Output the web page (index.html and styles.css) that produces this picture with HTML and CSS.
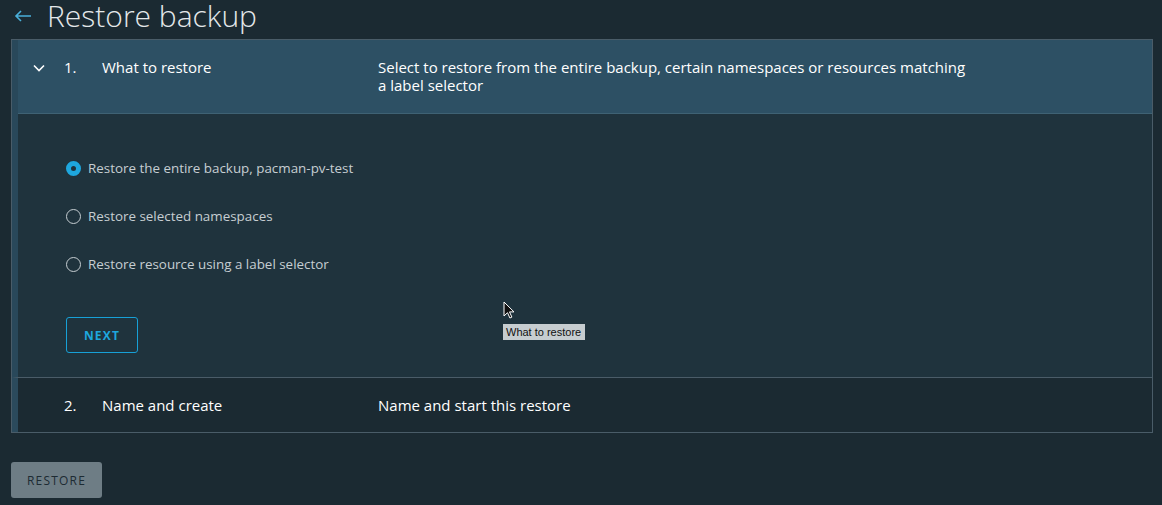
FILE: index.html
```html
<!DOCTYPE html>
<html lang="en">
<head>
    <meta charset="UTF-8">
    <title>Restore backup</title>
    <link rel="stylesheet" href="styles.css">
</head>
<body>
    <div class="page">
        <div class="title-bar">
            <svg class="back" width="20" height="14" viewBox="0 0 20 14">
                <path d="M18 7H3M8 2L3 7l5 5" fill="none" stroke="#49afd9" stroke-width="1.6"/>
            </svg>
            <h1>Restore backup</h1>
        </div>

        <div class="steps">
            <div class="step active">
                <div class="step-head">
                    <svg class="chevron" width="12" height="8" viewBox="0 0 12 8">
                        <path d="M1 1.5l5 5 5-5" fill="none" stroke="#fff" stroke-width="1.6"/>
                    </svg>
                    <span class="num">1.</span>
                    <span class="name">What to restore</span>
                    <span class="desc">Select to restore from the entire backup, certain namespaces or resources matching a label selector</span>
                </div>
                <div class="step-body">
                    <label class="radio"><span class="dot checked"></span>Restore the entire backup, pacman-pv-test</label>
                    <label class="radio"><span class="dot"></span>Restore selected namespaces</label>
                    <label class="radio"><span class="dot"></span>Restore resource using a label selector</label>
                    <button class="btn-outline">NEXT</button>

                    <div class="tip-wrap">
                        <svg class="cursor" width="12" height="18" viewBox="0 0 12 18">
                            <path d="M1 1v14l3.5-3.3 2.4 5.3 2-0.9-2.4-5.2H11z" fill="#111" stroke="#fff" stroke-width="1"/>
                        </svg>
                        <span class="tooltip">What to restore</span>
                    </div>
                </div>
            </div>
            <div class="step">
                <div class="step-head">
                    <span class="chevron-space"></span>
                    <span class="num">2.</span>
                    <span class="name">Name and create</span>
                    <span class="desc">Name and start this restore</span>
                </div>
            </div>
        </div>

        <button class="btn-disabled">RESTORE</button>
    </div>
</body>
</html>
```

FILE: styles.css
```css
body {
    margin: 0;
    background-color: #1b2a32;
    font-family: 'Open Sans', 'Lato', sans-serif;
    color: #e9ecef;
}

.page {
    padding: 0 9px 0 11px;
}

.title-bar {
    display: flex;
    align-items: center;
    height: 32px;
    padding-left: 2px;
}

.back {
    margin-right: 14px;
}

h1 {
    margin: 0;
    font-size: 30px;
    line-height: 32px;
    font-weight: 300;
    color: #e4e8ea;
}

.steps {
    margin-top: 7px;
    border: 1px solid #4a5c68;
}

.step {
    border-left: 6px solid #2b4a5c;
}

.step + .step {
    border-top: 1px solid #4a5c68;
}

.step.active {
    border-left-color: #29485a;
}

.step-head {
    display: flex;
    align-items: flex-start;
    padding: 18px 0 0 0;
    font-size: 15px;
    line-height: 18px;
    color: #fff;
    height: 36px;
}

.step.active .step-head {
    background-color: #2d5064;
    height: 55px;
    border-bottom: 1px solid #3f6274;
}

.chevron, .chevron-space {
    width: 12px;
    margin: 6px 0 0 15px;
    flex-shrink: 0;
}

.num {
    width: 38px;
    margin-left: 19px;
    flex-shrink: 0;
}

.name {
    width: 276px;
    flex-shrink: 0;
}

.desc {
    max-width: 596px;
}

.step-body {
    position: relative;
    background-color: #1f333d;
    padding: 38px 0 24px 48px;
}

.radio {
    display: flex;
    align-items: center;
    height: 48px;
    font-size: 13.4px;
    color: #c6ced2;
}

.radio:first-child {
    margin-top: -8px;
}

.dot {
    width: 13px;
    height: 13px;
    border: 1px solid #c6ced2;
    border-radius: 50%;
    margin-right: 7px;
    box-sizing: content-box;
}

.dot.checked {
    border: 5px solid #1ea7de;
    width: 5px;
    height: 5px;
    background-color: #1f333d;
}

.btn-outline {
    margin-top: 29px;
    width: 72px;
    height: 36px;
    border: 1px solid #17a0d6;
    border-radius: 3px;
    background: transparent;
    color: #1ea7de;
    font-family: inherit;
    font-size: 12px;
    font-weight: 700;
    letter-spacing: 1.2px;
}

.tip-wrap {
    position: absolute;
    left: 485px;
    top: 187px;
}

.cursor {
    display: block;
}

.tooltip {
    position: absolute;
    left: 0;
    top: 23px;
    white-space: nowrap;
    background-color: #c6cdd0;
    color: #111;
    font-family: 'Liberation Sans', sans-serif;
    font-size: 11px;
    padding: 2px 4px 2px 3px;
}

.btn-disabled {
    margin-top: 29px;
    width: 91px;
    height: 36px;
    border: none;
    border-radius: 3px;
    background-color: #6e7d85;
    color: #1d2b33;
    font-family: inherit;
    font-size: 12px;
    letter-spacing: 1.2px;
}
```
